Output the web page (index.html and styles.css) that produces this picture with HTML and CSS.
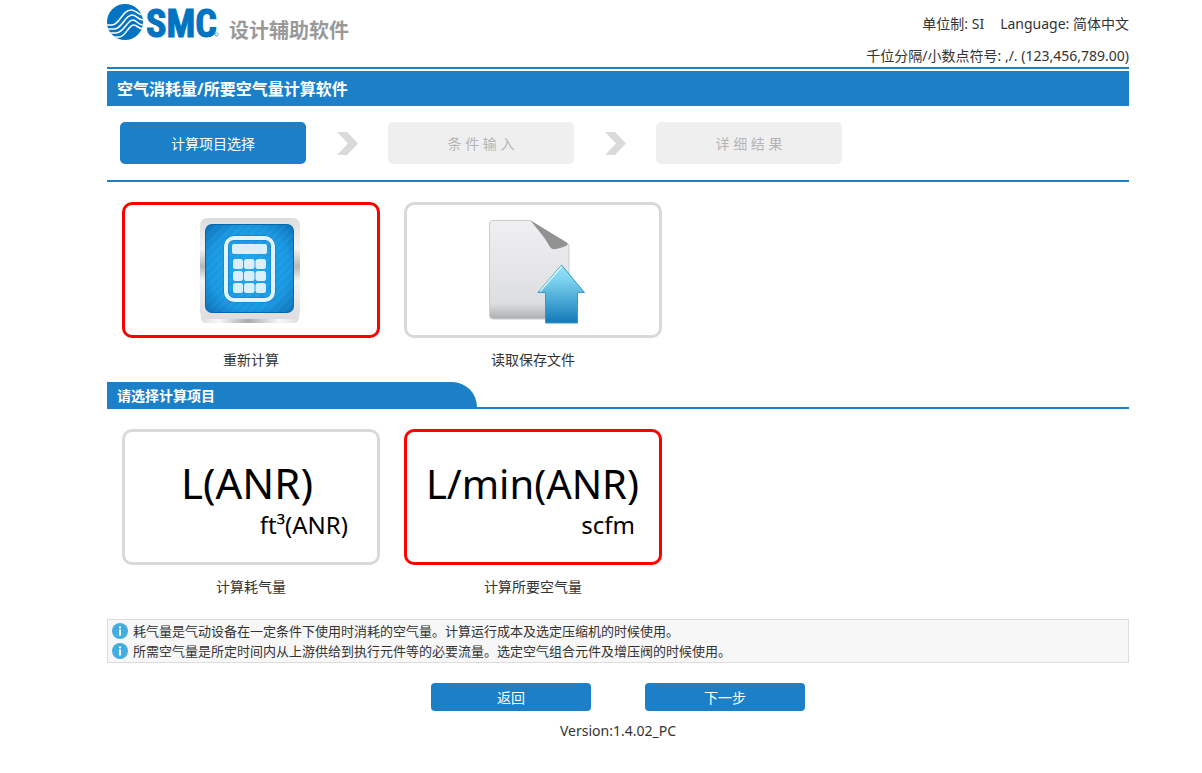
FILE: index.html
```html
<!DOCTYPE html>
<html lang="zh-CN">
<head>
<meta charset="utf-8">
<meta name="viewport" content="width=device-width, initial-scale=1">
<title>空气消耗量/所要空气量计算软件</title>
<link rel="stylesheet" href="styles.css">
</head>
<body>
<div class="page">
  <header class="header">
    <div class="brand">
      <svg class="logo" width="112" height="48" viewBox="0 0 112 48" role="img" aria-label="SMC">
        <defs><clipPath id="globe"><circle cx="18" cy="22" r="18"/></clipPath></defs>
        <g clip-path="url(#globe)">
          <rect width="36" height="40" fill="#0073c2"/>
          <g fill="none" stroke="#fff" stroke-width="1.6">
            <path d="M-1 25H5C13 25 15 10 24 10C30 10 30 15 37 15"/>
            <path d="M-1 29H7C15 29 18 15 25 15C30 15 30 20 37 20"/>
            <path d="M-1 33H9C17 33 20 20 26 20C30 20 30 25 37 25"/>
            <path d="M-1 37H12C19 37 21 25 27 25C30 25 31 29 37 29"/>
          </g>
        </g>
        <text class="logo-text" x="39" y="37">SMC</text>
        <circle cx="109.500" cy="34.500" r="1.500" fill="none" stroke="#4a9bd3" stroke-width="1"/>
      </svg>
      <span class="brand-name">设计辅助软件</span>
    </div>
    <div class="settings">
      <div class="settings-row"><span>单位制: SI</span><span>Language: 简体中文</span></div>
      <div class="settings-row"><span>千位分隔/小数点符号: ,/. (123,456,789.00)</span></div>
    </div>
  </header>

  <main>
    <h1 class="title">空气消耗量/所要空气量计算软件</h1>

    <nav class="steps">
      <button type="button" class="step step-active" aria-current="step">计算项目选择</button>
      <svg class="chevron" width="22" height="24" viewBox="0 0 22 24" aria-hidden="true"><path d="M1 1H11L22 12.500L11 24H1L12 12.500Z"/></svg>
      <button type="button" class="step" disabled>条 件 输 入</button>
      <svg class="chevron" width="22" height="24" viewBox="0 0 22 24" aria-hidden="true"><path d="M1 1H11L22 12.500L11 24H1L12 12.500Z"/></svg>
      <button type="button" class="step" disabled>详 细 结 果</button>
    </nav>

    <div class="cards">
      <button type="button" class="card" aria-pressed="true">
        <span class="tile tile-selected">
          <svg width="252" height="130" viewBox="0 0 252 130" aria-hidden="true">
            <defs>
              <linearGradient id="metal" x1="0" y1="0" x2="0" y2="1">
                <stop offset="0" stop-color="#dcdcdc"/><stop offset=".3" stop-color="#f4f4f4"/>
                <stop offset=".48" stop-color="#b9b9b9"/><stop offset=".62" stop-color="#f4f4f4"/>
                <stop offset="1" stop-color="#dedcde"/>
              </linearGradient>
              <linearGradient id="base" x1="0" y1="0" x2="1" y2="0">
                <stop offset="0" stop-color="#ddd"/><stop offset=".18" stop-color="#f8f8f8"/>
                <stop offset=".48" stop-color="#aaa"/><stop offset=".8" stop-color="#f8f8f8"/>
                <stop offset="1" stop-color="#ddd"/>
              </linearGradient>
              <radialGradient id="blue" cx=".5" cy=".5" r=".72">
                <stop offset="0" stop-color="#1ea6ee"/><stop offset=".65" stop-color="#1796e0"/>
                <stop offset="1" stop-color="#0a6cb2"/>
              </radialGradient>
              <pattern id="hatch" width="6" height="6" patternUnits="userSpaceOnUse" patternTransform="rotate(45)">
                <rect width="3" height="6" fill="#fff" opacity=".04"/>
              </pattern>
            </defs>
            <rect x="76" y="100" width="98" height="18" rx="5" fill="url(#base)"/>
            <rect x="75" y="13" width="100" height="101" rx="7" fill="url(#metal)"/>
            <rect x="80" y="19" width="89" height="89" rx="7" fill="#0868ae"/>
            <rect x="81" y="20" width="87" height="87" rx="6" fill="url(#blue)"/>
            <rect x="81" y="20" width="87" height="87" rx="6" fill="url(#hatch)"/>
            <rect x="101" y="33" width="47" height="62" rx="8" fill="none" stroke="#0f7dc6" stroke-width="5"/>
            <rect x="101" y="33" width="47" height="62" rx="8" fill="none" stroke="#e2f3fc" stroke-width="4"/>
            <g fill="#d9f0fc">
              <rect x="107" y="39" width="35" height="10" rx="2"/>
              <rect x="108" y="54" width="10" height="10" rx="2.500"/><rect x="119" y="54" width="10.500" height="10" rx="2.500"/><rect x="130.500" y="54" width="10.500" height="10" rx="2.500"/>
              <rect x="108" y="66" width="10" height="10" rx="2.500"/><rect x="119" y="66" width="10.500" height="10" rx="2.500"/><rect x="130.500" y="66" width="10.500" height="10" rx="2.500"/>
              <rect x="108" y="78" width="10" height="10" rx="2.500"/><rect x="119" y="78" width="10.500" height="10" rx="2.500"/><rect x="130.500" y="78" width="10.500" height="10" rx="2.500"/>
            </g>
          </svg>
        </span>
        <span class="caption">重新计算</span>
      </button>
      <button type="button" class="card" aria-pressed="false">
        <span class="tile">
          <svg width="252" height="130" viewBox="0 0 252 130" aria-hidden="true">
            <defs>
              <linearGradient id="sheet" x1="0" y1="0" x2="0" y2="1">
                <stop offset="0" stop-color="#f0f0f2"/><stop offset=".84" stop-color="#dddee0"/>
                <stop offset="1" stop-color="#acaeb1"/>
              </linearGradient>
              <linearGradient id="arrow" x1="0" y1="0" x2="0" y2="1">
                <stop offset="0" stop-color="#95e6fa"/><stop offset=".25" stop-color="#7dd3f0"/>
                <stop offset="1" stop-color="#1279b8"/>
              </linearGradient>
            </defs>
            <path d="M86 15.500H123L160 38Q162 39 162 42V114H86Q82.500 114 82.500 110V19Q82.500 15.500 86 15.500Z" fill="url(#sheet)" stroke="#ccc" stroke-width="1"/>
            <path d="M123.500 15.500L159.500 37.500Q162 39.500 159 41Q154 43 149 44Q145 45 143 42Q138 33 132 26Z" fill="#929292"/>
            <path d="M154.500 60L177.500 87.500H170.500V118H138.500V87.500H131Z" fill="url(#arrow)" stroke="#3b98c6" stroke-width="1" stroke-linejoin="round"/>
            <path d="M133 86.500L154.500 61.500" fill="none" stroke="#d4f6fd" stroke-width="1.500"/>
          </svg>
        </span>
        <span class="caption">读取保存文件</span>
      </button>
    </div>

    <div class="section-head"><h2 class="section-tab">请选择计算项目</h2></div>

    <div class="cards">
      <button type="button" class="card" aria-pressed="false">
        <span class="tile">
          <svg class="unit" width="252" height="130" viewBox="0 0 252 130">
            <text class="unit-main" x="188" y="67" text-anchor="end">L(ANR)</text>
            <text class="unit-sub" x="223" y="102" text-anchor="end">ft³(ANR)</text>
          </svg>
        </span>
        <span class="caption">计算耗气量</span>
      </button>
      <button type="button" class="card" aria-pressed="true">
        <span class="tile tile-selected">
          <svg class="unit" width="252" height="130" viewBox="0 0 252 130">
            <text class="unit-main unit-long" x="232" y="67" text-anchor="end">L/min(ANR)</text>
            <text class="unit-sub" x="228" y="102" text-anchor="end">scfm</text>
          </svg>
        </span>
        <span class="caption">计算所要空气量</span>
      </button>
    </div>

    <ul class="notes">
      <li class="note"><svg class="info" width="16" height="16" viewBox="0 0 16 16" aria-hidden="true"><circle cx="8" cy="8" r="8" fill="#43ade0"/><path d="M7 3.500H9V5.200H7ZM7 6.500H9V12.500H7Z" fill="#fff"/></svg>耗气量是气动设备在一定条件下使用时消耗的空气量。计算运行成本及选定压缩机的时候使用。</li>
      <li class="note"><svg class="info" width="16" height="16" viewBox="0 0 16 16" aria-hidden="true"><circle cx="8" cy="8" r="8" fill="#43ade0"/><path d="M7 3.500H9V5.200H7ZM7 6.500H9V12.500H7Z" fill="#fff"/></svg>所需空气量是所定时间内从上游供给到执行元件等的必要流量。选定空气组合元件及增压阀的时候使用。</li>
    </ul>

    <div class="actions">
      <button type="button" class="action">返回</button>
      <button type="button" class="action">下一步</button>
    </div>
  </main>
  <footer class="version">Version:1.4.02_PC</footer>
</div>
</body>
</html>
```
FILE: styles.css
```css
* {
  box-sizing: border-box;
}

body {
  margin: 0;
  background: #fff;
  color: #333;
  font: 14px/20px "Noto Sans", "Noto Sans CJK SC", sans-serif;
}

button {
  padding: 2px 0 0;
  border: 0;
  background: none;
  color: inherit;
  font: inherit;
  cursor: pointer;
}

svg {
  display: block;
}

.page {
  padding: 0 73px 0 107px;
}

.header {
  display: flex;
  justify-content: space-between;
  height: 69px;
  border-bottom: 2px solid #1c80c9;
}

.brand {
  display: flex;
  align-items: flex-start;
  gap: 10px;
}

.logo {
  overflow: visible;
}

.logo-text {
  fill: #0073c2;
  stroke: #0073c2;
  stroke-width: 1px;
  font: bold 38px "Liberation Sans Narrow", "Roboto Condensed", Roboto, sans-serif;
}

.brand-name {
  padding-top: 17px;
  color: #999;
  font-size: 20px;
  font-weight: bold;
  line-height: 28px;
}

.settings {
  display: flex;
  flex-direction: column;
  align-items: flex-end;
  gap: 12px;
  padding-top: 14px;
}

.settings-row {
  display: flex;
  gap: 16px;
}

.title {
  margin: 2px 0 0;
  padding: 2px 10px 0;
  background: #1c80c9;
  color: #fff;
  font-size: 16px;
  line-height: 33px;
}

.steps {
  display: flex;
  align-items: center;
  gap: 30px;
  padding: 16px 13px;
  border-bottom: 2px solid #1c80c9;
}

.step {
  width: 186px;
  height: 42px;
  border-radius: 5px;
  background: #efefef;
  color: #b5b5b5;
}

.step-active {
  background: #1c80c9;
  color: #fff;
}

.chevron {
  fill: #dadada;
}

.cards {
  display: flex;
  gap: 24px;
  padding: 20px 15px 12px;
}

.card {
  display: flex;
  flex-direction: column;
  align-items: center;
  gap: 12px;
  padding: 0;
}

.tile {
  border: 3px solid #d9d9d9;
  border-radius: 10px;
}

.tile-selected {
  border-color: #f00;
}

.unit {
  fill: #000;
  font-family: "Noto Sans", sans-serif;
}

.unit-main {
  font-size: 42px;
}

.unit-long {
  font-size: 40px;
}

.unit-sub {
  font-size: 24px;
}

.section-head {
  border-bottom: 2px solid #1c80c9;
}

.section-tab {
  width: 370px;
  margin: 0;
  padding: 2px 10px 0;
  border-top-right-radius: 25px;
  background: #1c80c9;
  color: #fff;
  font-size: 14px;
  line-height: 23px;
}

.notes {
  margin: 10px 0 0;
  padding: 1px 4px;
  border: 1px solid #ddd;
  background: #f7f7f7;
  list-style: none;
  font-size: 13px;
}

.note {
  display: flex;
  align-items: center;
  gap: 5px;
}

.actions {
  display: flex;
  justify-content: center;
  gap: 54px;
  padding: 20px 0 10px;
}

.action {
  width: 160px;
  height: 28px;
  border-radius: 4px;
  background: #1c80c9;
  color: #fff;
}

.version {
  text-align: center;
}
```
